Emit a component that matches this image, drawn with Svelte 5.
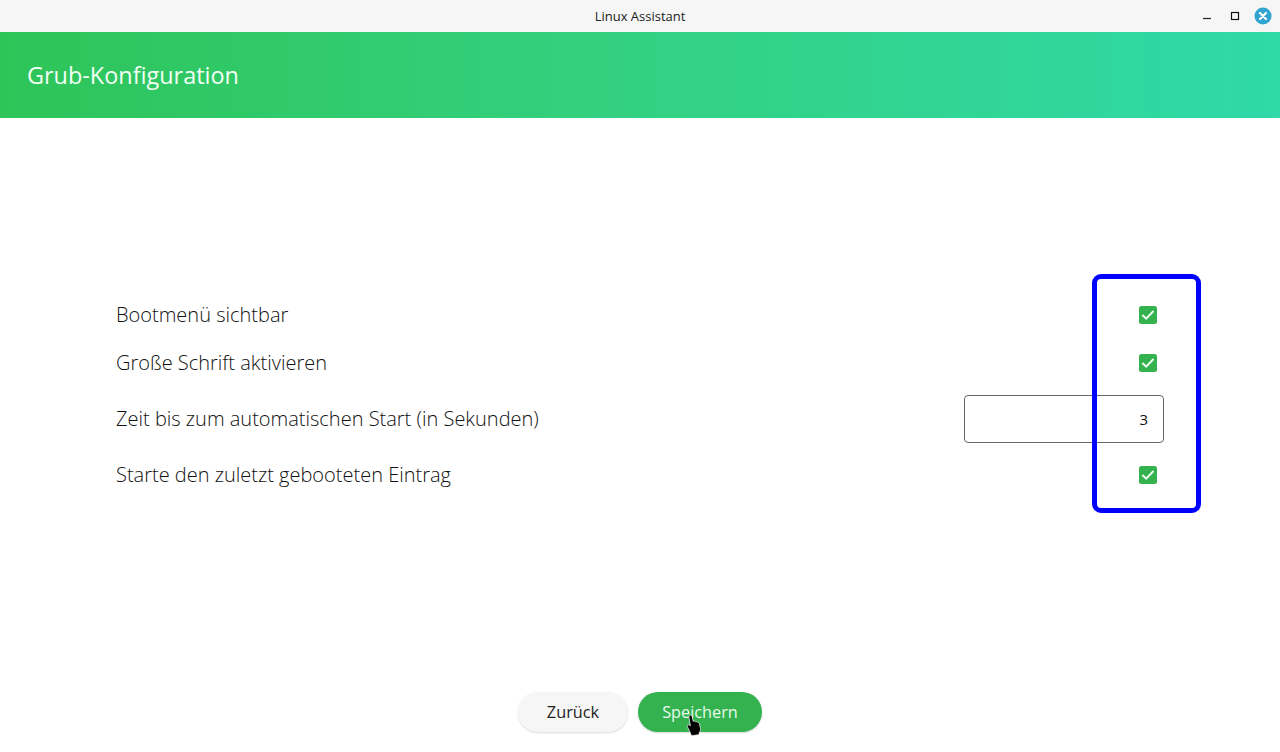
<script>
  let rows = [
    { label: "Bootmenü sichtbar", type: "check", value: true },
    { label: "Große Schrift aktivieren", type: "check", value: true },
    { label: "Zeit bis zum automatischen Start (in Sekunden)", type: "number", value: 3 },
    { label: "Starte den zuletzt gebooteten Eintrag", type: "check", value: true }
  ];
</script>

<div class="window">
  <div class="titlebar">
    <span class="win-title">Linux Assistant</span>
    <div class="win-buttons">
      <svg width="10" height="10" viewBox="0 0 10 10"><path d="M1 7.500h8" stroke="#222" stroke-width="1.2" /></svg>
      <svg width="10" height="10" viewBox="0 0 10 10"><rect x="1.500" y="1.500" width="7" height="7" fill="none" stroke="#111" stroke-width="1.2" /></svg>
      <svg class="close" width="18" height="18" viewBox="0 0 18 18">
        <circle cx="9" cy="9" r="8.500" fill="#31a3cf" />
        <path d="M6 6l6 6M12 6l-6 6" stroke="#fff" stroke-width="2.2" stroke-linecap="round" />
      </svg>
    </div>
  </div>

  <header class="header">
    <h1>Grub-Konfiguration</h1>
  </header>

  <main class="content">
    <div class="rows">
      {#each rows as row}
        <div class="row" class:tall={row.type === "number"}>
          <span class="label">{row.label}</span>
          {#if row.type === "check"}
            <span class="check">
              <svg width="18" height="18" viewBox="0 0 18 18">
                <rect width="18" height="18" rx="2.500" fill="#33b24f" />
                <path d="M3.400 9l3.800 3.700 7.300-7.700" fill="none" stroke="#f2fbf4" stroke-width="2" />
              </svg>
            </span>
          {:else}
            <div class="number">{row.value}</div>
          {/if}
        </div>
      {/each}
    </div>
  </main>

  <footer class="footer">
    <button class="btn">Zurück</button>
    <button class="btn primary">Speichern</button>
  </footer>

  <div class="highlight"></div>
  <svg class="cursor" width="16" height="22" viewBox="0 0 16 22">
    <path d="M3.500 1.500c1-.8 2.200-.3 2.500.8l1.200 5 .6-.2c.8-.2 1.400 0 1.800.6.700-.3 1.500-.1 1.900.6.800-.2 1.500.2 1.800 1l1.200 5.200c.3 1.400-.1 2.600-1 3.500l-.6 2.700-7.500 1-1-2.700L1.500 13c-.5-.8-.3-1.700.4-2.100.6-.3 1.300-.2 1.800.3l.7.7L2.900 3.500c-.1-.8 0-1.500.6-2z" fill="#000" stroke="#fff" stroke-width=".7" />
  </svg>
</div>

<style>
  :global(body) {
    margin: 0;
    background: #fff;
  }
  .window {
    position: relative;
    height: 752px;
    display: flex;
    flex-direction: column;
    font-family: "Open Sans", "Noto Sans", sans-serif;
    color: #111;
    overflow: hidden;
  }
  .titlebar {
    height: 32px;
    flex: none;
    background: #f6f6f6;
    display: flex;
    align-items: center;
    justify-content: center;
    position: relative;
  }
  .win-title {
    font-size: 13px;
    font-weight: 500;
    color: #222;
  }
  .win-buttons {
    position: absolute;
    right: 8px;
    top: 7px;
    display: flex;
    align-items: center;
    gap: 18px;
  }
  .close {
    margin-left: -4px;
  }
  .header {
    height: 86px;
    flex: none;
    display: flex;
    align-items: center;
    padding: 0 27px;
    background: linear-gradient(90deg, #2ec458, #33d07e 45%, #2fd9a8);
  }
  h1 {
    margin: 0;
    font-size: 23.450px;
    font-weight: 400;
    color: #f2fff5;
  }
  .content {
    flex: 1;
    display: flex;
    flex-direction: column;
    justify-content: center;
    padding: 0 116px;
  }
  .rows {
    display: flex;
    flex-direction: column;
    gap: 16px;
  }
  .row {
    height: 32px;
    display: flex;
    align-items: center;
    justify-content: space-between;
  }
  .row.tall {
    height: 48px;
  }
  .label {
    font-size: 20px;
    font-weight: 300;
    padding-bottom: 2px;
  }
  .check {
    display: flex;
    margin-right: 7px;
  }
  .number {
    width: 200px;
    height: 48px;
    box-sizing: border-box;
    border: 1px solid #666;
    border-radius: 4px;
    display: flex;
    align-items: center;
    justify-content: flex-end;
    padding-right: 15px;
    font-size: 15px;
    font-weight: 400;
  }
  .footer {
    flex: none;
    display: flex;
    justify-content: center;
    gap: 10px;
    padding: 20px 0;
  }
  .btn {
    height: 40px;
    width: 110px;
    border: none;
    border-radius: 20px;
    font-family: inherit;
    font-size: 16.300px;
    color: #222;
    background: #f6f6f6;
    box-shadow: 0 1px 2px rgba(0, 0, 0, 0.15);
  }
  .btn.primary {
    width: 124px;
    background: #33b24f;
    color: #e8fbec;
  }
  .highlight {
    position: absolute;
    left: 1092px;
    top: 274px;
    width: 109px;
    height: 239px;
    box-sizing: border-box;
    border: 5px solid #0000ff;
    border-radius: 9px;
  }
  .cursor {
    position: absolute;
    left: 686px;
    top: 714px;
  }
</style>
